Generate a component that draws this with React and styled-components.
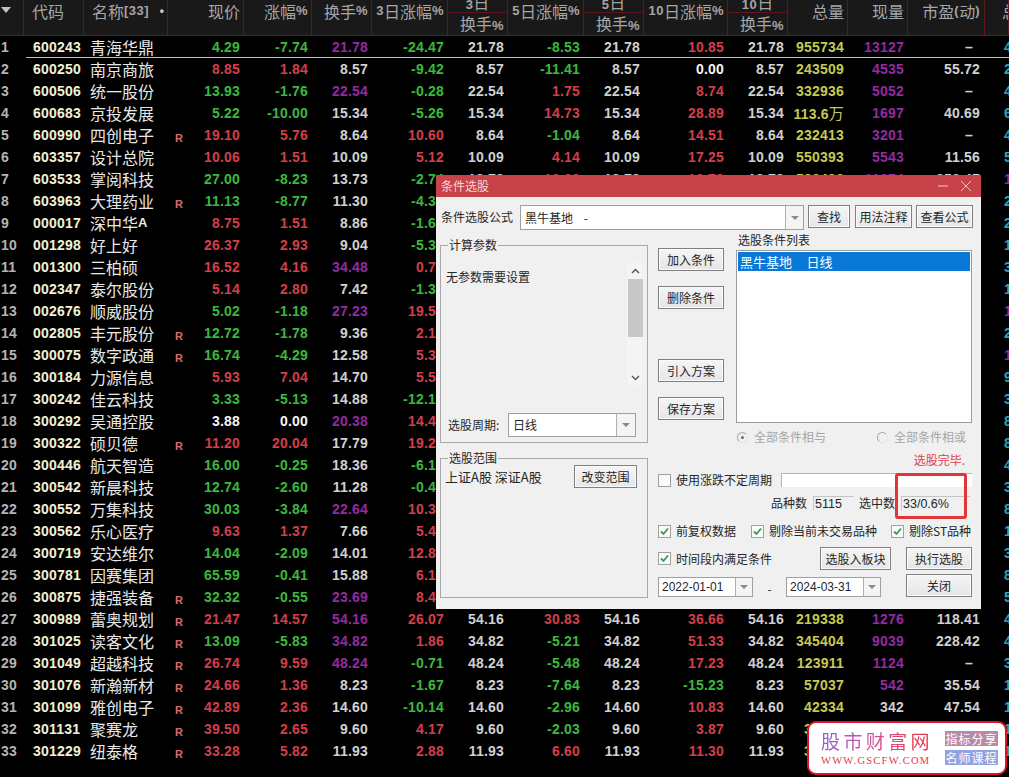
import React from "react";
import styled, { createGlobalStyle } from "styled-components";

const CJK = `"Noto Sans CJK SC", "Liberation Sans", sans-serif`;
const LATIN = `"Liberation Sans", "Noto Sans CJK SC", sans-serif`;

const Global = createGlobalStyle`
  html, body { margin: 0; padding: 0; background: #000; }
  * { box-sizing: border-box; }
`;

const COLORS = {
  green: "#3cb83f",
  red: "#d23f4b",
  white: "#f4f4f4",
  plain: "#d0d0d0",
  purple: "#932aa0",
  yellow: "#c6ca52",
  teal: "#2fa4b4",
};

const WIDTHS = [24, 60, 84, 76, 68, 60, 76, 60, 76, 60, 84, 60, 60, 60, 77, 24];

const Screen = styled.div`
  position: relative;
  width: 1009px;
  height: 777px;
  overflow: hidden;
  background: #000;
  font-family: ${CJK};
`;

const HeaderRow = styled.div`
  display: flex;
  height: 36px;
  background: #191919;
  border-bottom: 1px solid #6b1722;
`;

const HeadCell = styled.div`
  flex: none;
  width: ${(p) => p.$w}px;
  height: 35px;
  display: flex;
  align-items: flex-start;
  justify-content: ${(p) => p.$justify || "flex-end"};
  padding: 0 ${(p) => p.$pr ?? 3}px 0 ${(p) => p.$pl ?? 0}px;
  border-right: 1px solid #5e1720;
  color: #a6a6a6;
  font-size: 16px;
  line-height: 22px;
  white-space: nowrap;
  overflow: hidden;
`;

const StackedHead = styled.div`
  flex: none;
  width: ${(p) => p.$w}px;
  height: 35px;
  border-right: 1px solid #5e1720;
  color: #a6a6a6;
  font-size: 16px;
  text-align: right;
  white-space: nowrap;
  overflow: hidden;
`;

const HeadTop = styled.div`
  height: 13px;
  line-height: 5px;
  text-align: center;
  border-bottom: 1px solid #5e1720;
`;

const HeadBottom = styled.div`
  height: 22px;
  line-height: 21px;
  padding-right: 3px;
`;

const Latin = styled.span`
  font-family: ${LATIN};
  font-weight: 700;
  font-size: 13px;
  letter-spacing: 0.5px;
`;

const Dot = styled.span`
  font-family: ${LATIN};
  font-size: 12px;
  color: #c8c8c8;
  margin-left: auto;
  font-weight: 700;
`;

const SortArrow = styled.svg`
  display: block;
  margin: 7px 0 0 1px;
`;

const Rows = styled.div`
  display: flex;
  flex-direction: column;
`;

const DataRow = styled.div`
  position: relative;
  display: flex;
  height: 22px;
  line-height: 22px;
  white-space: nowrap;
  &::after {
    content: "";
    display: ${(p) => (p.$selected ? "block" : "none")};
    position: absolute;
    left: 26px;
    right: 0;
    bottom: 0;
    height: 1px;
    background: #c4c49e;
  }
`;

const Cell = styled.div`
  flex: none;
  width: ${(p) => p.$w}px;
  display: flex;
  justify-content: flex-end;
  padding-right: ${(p) => p.$pr ?? 4}px;
  color: ${(p) => COLORS[p.$c] || COLORS.plain};
  font-family: ${LATIN};
  font-weight: 700;
  font-size: 14px;
  letter-spacing: 0.2px;
  overflow: hidden;
`;

const IndexCell = styled(Cell)`
  justify-content: flex-start;
  padding: 0 0 0 1px;
  color: #b4b4b4;
`;

const CodeCell = styled(Cell)`
  justify-content: flex-start;
  padding: 0 0 0 9px;
  color: #f1f1d6;
`;

const NameCell = styled(Cell)`
  justify-content: flex-start;
  padding: 0 0 0 6px;
  font-family: ${CJK};
  font-weight: 400;
  font-size: 16px;
  letter-spacing: 0;
  color: #e8e8e8;
`;

const PriceCell = styled(Cell)`
  justify-content: space-between;
  padding-left: 7px;
`;

const LastCell = styled(Cell)`
  justify-content: flex-start;
  padding: 0 0 0 19px;
`;

const Flag = styled.span`
  font-size: 11px;
  color: #d86a6a;
  margin-top: 3px;
`;

const Unit = styled.span`
  font-family: ${CJK};
  font-weight: 400;
  font-size: 15px;
`;

/* dialog */
const Dialog = styled.div`
  position: absolute;
  left: 436px;
  top: 175px;
  width: 545px;
  height: 434px;
  background: #f0f0f0;
  color: #262626;
  font-size: 12px;
  line-height: 14px;
`;

const TitleBar = styled.div`
  height: 22px;
  background: #c8424a;
  color: #f6d6d6;
  font-size: 12px;
  line-height: 22px;
  padding: 0 5px;
  display: flex;
  align-items: center;
`;

const WinControls = styled.svg`
  margin-left: auto;
  margin-right: 4px;
`;

const FormulaRow = styled.div`
  display: flex;
  align-items: flex-start;
  margin-top: 8px;
  padding-left: 5px;
`;

const FormulaLabel = styled.span`
  width: 79px;
  line-height: 24px;
`;

const ComboBox = styled.div`
  flex: none;
  display: flex;
  width: ${(p) => p.$w}px;
  height: ${(p) => p.$h}px;
  margin-top: ${(p) => p.$mt || 0}px;
  background: #fff;
  border: 1px solid #a0a0a0;
`;

const ComboText = styled.span`
  flex: 1;
  padding-left: ${(p) => p.$pl ?? 4}px;
  line-height: ${(p) => p.$h - 2}px;
  white-space: pre;
  font-family: ${(p) => (p.$mono ? LATIN : CJK)};
`;

const ComboArrow = styled.span`
  flex: none;
  width: ${(p) => p.$w || 18}px;
  display: flex;
  align-items: center;
  justify-content: center;
  background: #f4f4f4;
  border-left: 1px solid #b0b0b0;
`;

const Tri = styled.span`
  width: 0;
  height: 0;
  border-left: 4px solid transparent;
  border-right: 4px solid transparent;
  border-top: 4px solid #8a8a8a;
`;

const PushButton = styled.button`
  flex: none;
  display: block;
  width: ${(p) => p.$w || 66}px;
  height: 23px;
  margin: ${(p) => p.$mt || 0}px 0 0 ${(p) => p.$ml || 0}px;
  padding: 0;
  background: linear-gradient(#f5f5f5, #e6e6e6);
  border: 1px solid #808080;
  box-shadow: inset 0 0 0 1px #fbfbfb;
  color: #262626;
  font-family: ${CJK};
  font-size: 12px;
  line-height: 20px;
`;

const Main = styled.div`
  display: flex;
  margin-top: 15px;
  padding-left: 4px;
`;

const LeftCol = styled.div`
  flex: none;
  width: 208px;
  display: flex;
  flex-direction: column;
  gap: 15px;
`;

const Group = styled.div`
  position: relative;
  height: ${(p) => p.$h}px;
  border: 1px solid #a8a8a8;
  display: flex;
  flex-direction: column;
`;

const Legend = styled.span`
  position: absolute;
  left: 7px;
  top: -8px;
  padding: 0 1px;
  background: #f0f0f0;
`;

const ParamArea = styled.div`
  display: flex;
  height: 122px;
  margin-top: 17px;
  padding: 7px 4px 0 5px;
`;

const ParamText = styled.span`
  flex: 1;
`;

const ScrollBar = styled.div`
  flex: none;
  width: 16px;
  height: 122px;
  margin-top: -7px;
  background: #f4f4f4;
  display: flex;
  flex-direction: column;
  align-items: center;
`;

const ScrollIcon = styled.svg`
  flex: none;
  margin: ${(p) => p.$m};
`;

const ScrollThumb = styled.div`
  width: 15px;
  height: 58px;
  background: #c8c8c8;
`;

const PeriodRow = styled.div`
  display: flex;
  align-items: center;
  margin-top: 28px;
  padding-left: 7px;
`;

const PeriodLabel = styled.span`
  width: 60px;
`;

const RangeRow = styled.div`
  display: flex;
  align-items: center;
  margin-top: 6px;
  padding: 0 10px 0 4px;
  justify-content: space-between;
`;

const RangeText = styled.span`
  font-size: 13px;
  white-space: nowrap;
`;

const RightCol = styled.div`
  flex: none;
  width: 314px;
  margin: -10px 0 0 10px;
`;

const Upper = styled.div`
  display: flex;
`;

const ButtonCol = styled.div`
  flex: none;
  width: 66px;
`;

const ListCol = styled.div`
  flex: none;
  width: 236px;
  margin-left: 12px;
`;

const ListLabel = styled.div`
  height: 15px;
  line-height: 10px;
  padding-left: 2px;
`;

const ListBox = styled.div`
  height: 173px;
  padding: 1px;
  background: #fff;
  border: 1px solid #9c9c9c;
`;

const ListItem = styled.div`
  height: 19px;
  font-size: 13px;
  line-height: 19px;
  padding-left: 2px;
  background: #0a78d6;
  color: #fff;
  white-space: pre;
`;

const RadioRow = styled.div`
  display: flex;
  height: 14px;
  margin-top: 7px;
  padding-left: 79px;
`;

const RadioItem = styled.label`
  flex: none;
  width: ${(p) => p.$w}px;
  display: flex;
  align-items: center;
  gap: 6px;
  color: #a6a6a6;
`;

const RadioMark = styled.span`
  flex: none;
  width: 11px;
  height: 11px;
  border-radius: 50%;
  border: 1px solid #a8a8a8;
  border-right-color: #e4e4e4;
  border-bottom-color: #e4e4e4;
  display: flex;
  align-items: center;
  justify-content: center;
  &::after {
    content: "";
    width: 3px;
    height: 3px;
    border-radius: 50%;
    background: ${(p) => (p.$on ? "#6e6e6e" : "transparent")};
  }
`;

const Status = styled.div`
  height: 14px;
  margin-top: 9px;
  padding-right: 7px;
  text-align: right;
  color: #dc4450;
`;

const OptionRow = styled.div`
  display: flex;
  align-items: center;
  height: 14px;
  margin-top: ${(p) => p.$mt}px;
  white-space: nowrap;
`;

const CheckItem = styled.label`
  flex: none;
  width: ${(p) => (p.$w ? `${p.$w}px` : "auto")};
  display: flex;
  align-items: center;
  gap: 5px;
  white-space: nowrap;
`;

const CheckBox = styled.span`
  flex: none;
  width: 13px;
  height: 13px;
  background: #fafafa;
  border: 1px solid #a0a0a0;
  display: flex;
  align-items: center;
  justify-content: center;
`;

const PlainInput = styled.div`
  width: 191px;
  height: 14px;
  margin-left: 9px;
  background: #fff;
  border-top: 1px solid #b4b4b4;
  border-left: 1px solid #b4b4b4;
`;

const CountsRow = styled(OptionRow)`
  padding-left: 113px;
`;

const CountLabel = styled.span`
  flex: none;
  width: 36px;
`;

const CountField = styled.span`
  flex: none;
  width: ${(p) => p.$w}px;
  height: 14px;
  margin: 0 5px 0 6px;
  padding-left: 1px;
  border-top: 1px solid #c4c4c4;
  border-left: 1px solid #c4c4c4;
  font-family: ${LATIN};
  font-size: 12.5px;
  line-height: 14px;
`;

const ActionRow = styled.div`
  display: flex;
  align-items: flex-start;
  margin-top: ${(p) => p.$mt}px;
`;

const ActionCheck = styled(CheckItem)`
  width: 162px;
  height: 23px;
`;

const Dash = styled.span`
  flex: none;
  width: 33px;
  text-align: center;
  margin-top: 8px;
`;

const Highlight = styled.div`
  position: absolute;
  left: 459px;
  top: 298px;
  width: 72px;
  height: 46px;
  border: 3px solid #e23636;
  border-radius: 3px;
`;

/* watermark */
const Watermark = styled.div`
  position: absolute;
  left: 807px;
  top: 721px;
  width: 200px;
  height: 54px;
  background: #fff;
  border: 2px solid #e0102a;
  border-radius: 9px;
  display: flex;
  padding: 0 7px 0 12px;
`;

const MarkBrand = styled.div`
  flex: none;
  width: 114px;
  display: flex;
  flex-direction: column;
  align-items: flex-start;
`;

const MarkTitle = styled.div`
  margin-top: 7px;
  font-size: 19px;
  line-height: 22px;
  letter-spacing: 3.4px;
  white-space: nowrap;
  background: linear-gradient(100deg, #8f5fd8, #d8508c 55%, #e8303c);
  -webkit-background-clip: text;
  background-clip: text;
  color: transparent;
`;

const MarkUrl = styled.div`
  margin-top: 3px;
  font-family: "Liberation Serif", serif;
  font-size: 10.5px;
  line-height: 12px;
  letter-spacing: 1.25px;
  color: #e2384c;
  white-space: nowrap;
`;

const MarkTags = styled.div`
  margin-left: auto;
  display: flex;
  flex-direction: column;
  gap: 4px;
  padding-top: 8px;
`;

const MarkTag = styled.span`
  width: 53px;
  height: 15px;
  background: ${(p) => p.$bg};
  color: #fff;
  font-size: 12px;
  line-height: 15px;
  letter-spacing: 1px;
  text-align: center;
  white-space: nowrap;
`;

const RAW = `600243|青海华鼎||4.29|-7.74|21.78|-24.47|-8.53|10.85|955734|13127|–|4
600250|南京商旅||8.85|1.84|8.57|-9.42|-11.41|0.00|243509|4535|55.72|2
600506|统一股份||13.93|-1.76|22.54|-0.28|1.75|8.74|332936|5052|–|4
600683|京投发展||5.22|-10.00|15.34|-5.26|14.73|28.89|113.6万|1697|40.69|6
600990|四创电子|R|19.10|5.76|8.64|10.60|-1.04|14.51|232413|3201|–|4
603357|设计总院||10.06|1.51|10.09|5.12|4.14|17.25|550393|5543|11.56|5
603533|掌阅科技||27.00|-8.23|13.73|-2.74|10.92|10.72|526496|11274|256.47|1
603963|大理药业|R|11.13|-8.77|11.30|-4.35||||||2
000017|深中华A||8.75|1.51|8.86|-1.63||||||2
001298|好上好||26.37|2.93|9.04|-5.32||||||1
001300|三柏硕||16.52|4.16|34.48|0.74||||||3
002347|泰尔股份||5.14|2.80|7.42|-1.35||||||1
002676|顺威股份||5.02|-1.18|27.23|19.51||||||1
002805|丰元股份|R|12.72|-1.78|9.36|2.16||||||2
300075|数字政通|R|16.74|-4.29|12.58|5.36||||||1
300184|力源信息||5.93|7.04|14.70|5.55||||||9
300242|佳云科技||3.33|-5.13|14.88|-12.14||||||3
300292|吴通控股||3.88|0.00|20.38|14.46||||||8
300322|硕贝德|R|11.20|20.04|17.79|19.27||||||8
300446|航天智造||16.00|-0.25|18.36|-6.12||||||4
300542|新晨科技||12.74|-2.60|11.28|-0.47||||||3
300552|万集科技||30.03|-3.84|22.64|10.33||||||8
300562|乐心医疗||9.63|1.37|7.66|5.41||||||1
300719|安达维尔||14.04|-2.09|14.01|12.85||||||3
300781|因赛集团||65.59|-0.41|15.88|6.14||||||8
300875|捷强装备|R|32.32|-0.55|23.69|8.42||||||5
300989|蕾奥规划|R|21.47|14.57|54.16|26.07|30.83|36.66|219338|1276|118.41|4
301025|读客文化|R|13.09|-5.83|34.82|1.86|-5.21|51.33|345404|9039|228.42|4
301049|超越科技|R|26.74|9.59|48.24|-0.71|-5.48|17.23|123911|1124|–|3
301076|新瀚新材|R|24.66|1.36|8.23|-1.67|-7.64|-15.23|57037|542|35.54|1
301099|雅创电子|R|42.89|2.36|14.60|-10.14|-2.96|10.83|42334|342|47.54|1
301131|聚赛龙|R|39.50|2.65|9.60|4.17|-2.03|3.87|31562|||1
301229|纽泰格|R|33.28|5.82|11.93|2.88|6.60|11.30|36418|||1`;

const ROWS = RAW.split("\n").map((l) => l.split("|"));
const MAGENTA_LAST = new Set([7, 13, 15]);

const sign = (v) => {
  const n = parseFloat(v);
  if (n > 0) return "red";
  if (n < 0) return "green";
  return "white";
};

const Mixed = ({ text }) =>
  text.split(/([\x00-\x7f]+)/).map((part, i) =>
    /^[\x00-\x7f]+$/.test(part) ? <Latin key={i}>{part}</Latin> : part
  );

const Num = ({ v }) =>
  v.endsWith("万") ? (
    <span>
      {v.slice(0, -1)}
      <Unit>万</Unit>
    </span>
  ) : (
    v
  );

const Row = ({ r, i }) => {
  const [code, name, flag, price, chg, turn, d3, d5, d10, vol, cur, pe, last] = r;
  const hidden = d5 === "";
  const turnC = parseFloat(turn) >= 20 ? "purple" : "plain";
  const T = hidden ? "" : turn;
  const curN = parseFloat(cur);
  return (
    <DataRow $selected={i === 0}>
      <IndexCell $w={WIDTHS[0]}>{i + 1}</IndexCell>
      <CodeCell $w={WIDTHS[1]}>{code}</CodeCell>
      <NameCell $w={WIDTHS[2]}>
        <Mixed text={name} />
      </NameCell>
      <PriceCell $w={WIDTHS[3]} $c={sign(chg)}>
        <Flag>{flag}</Flag>
        <span>{price}</span>
      </PriceCell>
      <Cell $w={WIDTHS[4]} $c={sign(chg)}>{chg}</Cell>
      <Cell $w={WIDTHS[5]} $c={turnC}>{turn}</Cell>
      <Cell $w={WIDTHS[6]} $c={sign(d3)}>{d3}</Cell>
      <Cell $w={WIDTHS[7]} $c="plain">{T}</Cell>
      <Cell $w={WIDTHS[8]} $c={sign(d5)}>{d5}</Cell>
      <Cell $w={WIDTHS[9]} $c="plain">{T}</Cell>
      <Cell $w={WIDTHS[10]} $c={sign(d10)}>{d10}</Cell>
      <Cell $w={WIDTHS[11]} $c="plain">{T}</Cell>
      <Cell $w={WIDTHS[12]} $c="yellow"><Num v={vol} /></Cell>
      <Cell $w={WIDTHS[13]} $c={curN >= 500 ? "purple" : "plain"}>{cur}</Cell>
      <Cell $w={WIDTHS[14]} $c="plain" $pr={pe === "–" ? 12 : 5}>{pe}</Cell>
      <LastCell $w={WIDTHS[15]} $c={MAGENTA_LAST.has(i + 1) ? "purple" : "teal"}>{last}</LastCell>
    </DataRow>
  );
};

const Stacked = ({ w, top }) => (
  <StackedHead $w={w}>
    <HeadTop><Mixed text={top} /></HeadTop>
    <HeadBottom><Mixed text="换手%" /></HeadBottom>
  </StackedHead>
);

const Header = () => (
  <HeaderRow>
    <HeadCell $w={WIDTHS[0]} $justify="flex-start" $pr={0}>
      <SortArrow width="10" height="6" viewBox="0 0 10 6">
        <path d="M0 0h10L5 6z" fill="#c4c4c4" />
      </SortArrow>
    </HeadCell>
    <HeadCell $w={WIDTHS[1]} $justify="flex-start" $pl={8}>代码</HeadCell>
    <HeadCell $w={WIDTHS[2]} $justify="flex-start" $pl={8}>
      <Mixed text="名称[33]" />
      <Dot>•</Dot>
    </HeadCell>
    <HeadCell $w={WIDTHS[3]}>现价</HeadCell>
    <HeadCell $w={WIDTHS[4]}><Mixed text="涨幅%" /></HeadCell>
    <HeadCell $w={WIDTHS[5]}><Mixed text="换手%" /></HeadCell>
    <HeadCell $w={WIDTHS[6]}><Mixed text="3日涨幅%" /></HeadCell>
    <Stacked w={WIDTHS[7]} top="3日" />
    <HeadCell $w={WIDTHS[8]}><Mixed text="5日涨幅%" /></HeadCell>
    <Stacked w={WIDTHS[9]} top="5日" />
    <HeadCell $w={WIDTHS[10]}><Mixed text="10日涨幅%" /></HeadCell>
    <Stacked w={WIDTHS[11]} top="10日" />
    <HeadCell $w={WIDTHS[12]}>总量</HeadCell>
    <HeadCell $w={WIDTHS[13]}>现量</HeadCell>
    <HeadCell $w={WIDTHS[14]} $pr={4}><Mixed text="市盈(动)" /></HeadCell>
    <HeadCell $w={WIDTHS[15]} $justify="flex-start" $pl={17} $pr={0}>总金额</HeadCell>
  </HeaderRow>
);

const Combo = ({ w, h, mt, text, arrow, pl, mono }) => (
  <ComboBox $w={w} $h={h} $mt={mt}>
    <ComboText $h={h} $pl={pl} $mono={mono}>{text}</ComboText>
    <ComboArrow $w={arrow}><Tri /></ComboArrow>
  </ComboBox>
);

const Check = ({ on }) => (
  <CheckBox>
    {on && (
      <svg width="9" height="9" viewBox="0 0 9 9">
        <path d="M1 4.5 3.5 7 8 1.5" fill="none" stroke="#3a9a4e" strokeWidth="1.8" />
      </svg>
    )}
  </CheckBox>
);

const ConditionDialog = () => (
  <Dialog>
    <TitleBar>
      条件选股
      <WinControls width="34" height="12" viewBox="0 0 34 12">
        <path d="M0 6h10M23 1l10 10M33 1 23 11" stroke="#f0c4c6" strokeWidth="1" fill="none" />
      </WinControls>
    </TitleBar>
    <FormulaRow>
      <FormulaLabel>条件选股公式</FormulaLabel>
      <Combo w={284} h={25} text="黑牛基地    -" arrow={18} />
      <PushButton $w={42} $ml={4}>查找</PushButton>
      <PushButton $w={57} $ml={5}>用法注释</PushButton>
      <PushButton $w={57} $ml={4}>查看公式</PushButton>
    </FormulaRow>
    <Main>
      <LeftCol>
        <Group $h={198}>
          <Legend>计算参数</Legend>
          <ParamArea>
            <ParamText>无参数需要设置</ParamText>
            <ScrollBar>
              <ScrollIcon $m="5px 0 5px" width="9" height="6" viewBox="0 0 9 6">
                <path d="M1 5 4.5 1.5 8 5" fill="none" stroke="#555" strokeWidth="1.4" />
              </ScrollIcon>
              <ScrollThumb />
              <ScrollIcon $m="38px 0 0" width="9" height="6" viewBox="0 0 9 6">
                <path d="M1 1 4.5 4.5 8 1" fill="none" stroke="#555" strokeWidth="1.4" />
              </ScrollIcon>
            </ScrollBar>
          </ParamArea>
          <PeriodRow>
            <PeriodLabel>选股周期:</PeriodLabel>
            <Combo w={128} h={24} text="日线" arrow={19} />
          </PeriodRow>
        </Group>
        <Group $h={140}>
          <Legend>选股范围</Legend>
          <RangeRow>
            <RangeText>上证A股 深证A股</RangeText>
            <PushButton $w={63}>改变范围</PushButton>
          </RangeRow>
        </Group>
      </LeftCol>
      <RightCol>
        <Upper>
          <ButtonCol>
            <PushButton $mt={13}>加入条件</PushButton>
            <PushButton $mt={15}>删除条件</PushButton>
            <PushButton $mt={50}>引入方案</PushButton>
            <PushButton $mt={15}>保存方案</PushButton>
          </ButtonCol>
          <ListCol>
            <ListLabel>选股条件列表</ListLabel>
            <ListBox>
              <ListItem>黑牛基地     日线</ListItem>
            </ListBox>
          </ListCol>
        </Upper>
        <RadioRow>
          <RadioItem $w={140}><RadioMark $on />全部条件相与</RadioItem>
          <RadioItem $w={90}><RadioMark />全部条件相或</RadioItem>
        </RadioRow>
        <Status>选股完毕.</Status>
        <OptionRow $mt={6}>
          <CheckItem><Check />使用涨跌不定周期</CheckItem>
          <PlainInput />
        </OptionRow>
        <CountsRow $mt={9}>
          <CountLabel>品种数</CountLabel>
          <CountField $w={41}>5115</CountField>
          <CountLabel>选中数</CountLabel>
          <CountField $w={69}>33/0.6%</CountField>
        </CountsRow>
        <OptionRow $mt={14}>
          <CheckItem $w={93}><Check on />前复权数据</CheckItem>
          <CheckItem $w={140}><Check on />剔除当前未交易品种</CheckItem>
          <CheckItem><Check on />剔除ST品种</CheckItem>
        </OptionRow>
        <ActionRow $mt={9}>
          <ActionCheck><Check on />时间段内满足条件</ActionCheck>
          <PushButton $w={71}>选股入板块</PushButton>
          <PushButton $w={66} $ml={15}>执行选股</PushButton>
        </ActionRow>
        <ActionRow $mt={4}>
          <Combo w={95} h={20} mt={3} text="2022-01-01" arrow={17} pl={3} mono />
          <Dash>-</Dash>
          <Combo w={95} h={20} mt={3} text="2024-03-31" arrow={17} pl={3} mono />
          <PushButton $w={66} $ml={25}>关闭</PushButton>
        </ActionRow>
      </RightCol>
    </Main>
    <Highlight />
  </Dialog>
);

export default function App() {
  return (
    <Screen>
      <Global />
      <Header />
      <Rows>
        {ROWS.map((r, i) => (
          <Row key={r[0]} r={r} i={i} />
        ))}
      </Rows>
      <ConditionDialog />
      <Watermark>
        <MarkBrand>
          <MarkTitle>股市财富网</MarkTitle>
          <MarkUrl>WWW.GSCFW.COM</MarkUrl>
        </MarkBrand>
        <MarkTags>
          <MarkTag $bg="#b98aa8">指标分享</MarkTag>
          <MarkTag $bg="#93a2e2">名师课程</MarkTag>
        </MarkTags>
      </Watermark>
    </Screen>
  );
}
